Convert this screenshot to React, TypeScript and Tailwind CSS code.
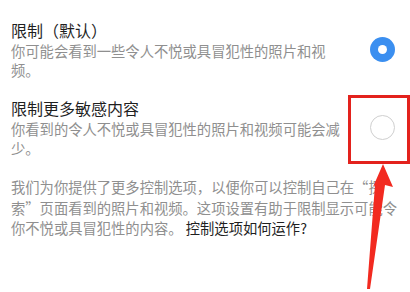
import React from "react";

function Radio({ checked }: { checked: boolean }) {
  return checked ? (
    <div className="w-[25px] h-[25px] rounded-full bg-[#3b8ff0] flex items-center justify-center shrink-0">
      <div className="w-[9px] h-[9px] rounded-full bg-white" />
    </div>
  ) : (
    <div className="w-[25px] h-[25px] rounded-full border-[1.5px] border-[#cfcfcf] bg-white shrink-0" />
  );
}

function Option({ title, desc, checked }: { title: string; desc: string; checked: boolean }) {
  return (
    <div className="flex items-center gap-[24px]">
      <div className="flex-1 min-w-0">
        <div className="text-[16px] leading-[22px] text-[#1f1f1f]">{title}</div>
        <div className="text-[14.3px] leading-[19px] text-[#8f8f8f]">{desc}</div>
      </div>
      <Radio checked={checked} />
    </div>
  );
}

export default function App() {
  return (
    <div
      className="relative w-[410px] h-[292px] bg-white overflow-hidden"
      style={{ fontFamily: '"Noto Sans CJK SC", "Noto Sans", sans-serif' }}
    >
      <div className="flex flex-col pl-[11px] pr-[15px] pt-[19px]">
        <Option title="限制（默认）" desc="你可能会看到一些令人不悦或具冒犯性的照片和视频。" checked={true} />
        <div className="h-[18px]" />
        <Option title="限制更多敏感内容" desc="你看到的令人不悦或具冒犯性的照片和视频可能会减少。" checked={false} />
        <p className="mt-[20px] pr-[0px] text-[14.3px] leading-[20.5px] text-[#8f8f8f] w-[390px]">
          我们为你提供了更多控制选项，以便你可以控制自己在“探索”页面看到的照片和视频。这项设置有助于限制显示可能令你不悦或具冒犯性的内容。
          <span className="text-[#1f1f1f]"> 控制选项如何运作?</span>
        </p>
      </div>

      <div className="absolute left-[348px] top-[95px] w-[62px] h-[69px] border-[3px] border-[#e3221d]" />

      <svg className="absolute inset-0" width="410" height="292" viewBox="0 0 410 292">
        <polygon
          points="383,164 393,187 385,185 370,289 367,289 375,185 373,187"
          fill="#f22a20"
        />
      </svg>
    </div>
  );
}
